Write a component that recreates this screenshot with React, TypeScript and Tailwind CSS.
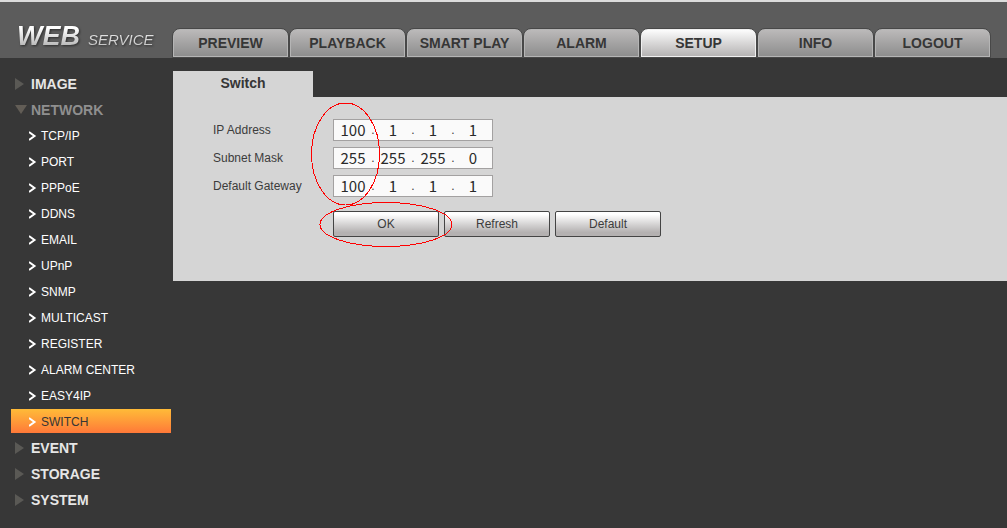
import React from 'react';

const tabs = ['PREVIEW', 'PLAYBACK', 'SMART PLAY', 'ALARM', 'SETUP', 'INFO', 'LOGOUT'];

interface MenuGroup {
  title: string;
  items?: string[];
}

const menu: MenuGroup[] = [
  { title: 'IMAGE' },
  {
    title: 'NETWORK',
    items: [
      'TCP/IP',
      'PORT',
      'PPPoE',
      'DDNS',
      'EMAIL',
      'UPnP',
      'SNMP',
      'MULTICAST',
      'REGISTER',
      'ALARM CENTER',
      'EASY4IP',
      'SWITCH',
    ],
  },
  { title: 'EVENT' },
  { title: 'STORAGE' },
  { title: 'SYSTEM' },
];

const fields = [
  { label: 'IP Address', value: ['100', '1', '1', '1'] },
  { label: 'Subnet Mask', value: ['255', '255', '255', '0'] },
  { label: 'Default Gateway', value: ['100', '1', '1', '1'] },
];

const Header: React.FC = () => (
  <header className="flex h-[58px] items-end border-t-2 border-[#dcdcdc] bg-[#5c5c5c]">
    <h1 className="flex w-[172px] shrink-0 items-baseline gap-2 pb-1 pl-[17px] italic drop-shadow-[1px_1px_1px_rgba(0,0,0,0.5)]">
      <span className="bg-linear-to-b from-white from-30% to-[#b4b4b4] to-80% bg-clip-text pr-1 text-[27px] leading-9 font-bold text-transparent">
        WEB
      </span>
      <span className="-ml-1 bg-linear-to-b from-[#f4f4f4] to-[#b4b4b4] bg-clip-text pr-1 text-[15px] leading-6 text-transparent">
        SERVICE
      </span>
    </h1>
    <nav className="flex">
      {tabs.map((tab) => (
        <button
          key={tab}
          type="button"
          className={`h-[30px] w-[117px] rounded-t-lg border border-[#484848] text-sm font-bold text-[#363636] ${
            tab === 'SETUP'
              ? 'bg-linear-to-b from-white to-[#b3b1b1] shadow-[inset_0_0_0_1px_#f0f0f0]'
              : 'bg-linear-to-b from-[#bdbbbb] to-[#8c8c8c] shadow-[inset_0_0_0_1px_#b5b5b5]'
          }`}
        >
          {tab}
        </button>
      ))}
    </nav>
  </header>
);

const Sidebar: React.FC = () => (
  <aside className="w-[173px] shrink-0 pt-[13px] pr-0.5 pl-[11px]">
    <ul>
      {menu.map(({ title, items }) => (
        <li key={title}>
          <button
            type="button"
            className={`flex h-[26px] w-full items-center pl-1 text-sm font-bold ${
              items ? 'text-[#8f8f8f]' : 'text-[#e6e6e6]'
            }`}
          >
            <svg className="mr-1 h-3 w-3 shrink-0" viewBox="0 0 12 12" aria-hidden="true">
              <path d={items ? 'M0 1H12L6 10Z' : 'M0 0L9 6L0 12Z'} fill={items ? '#625d56' : '#5a5955'} />
            </svg>
            {title}
          </button>
          {items && (
            <ul>
              {items.map((item) => (
                <li key={item} className="h-[26px]">
                  <a
                    href="#"
                    className={`flex h-6 items-center pt-0.5 pl-[18px] text-xs ${
                      item === 'SWITCH'
                        ? 'bg-linear-to-b from-[#ffbb38] to-[#ff7838] text-[#363636]'
                        : 'text-white'
                    }`}
                  >
                    <svg className="mr-1 h-2.5 w-2 shrink-0" viewBox="0 0 8 10" aria-hidden="true">
                      <path d="M0 1L5.5 5L0 9" fill="none" stroke="#fff" strokeWidth="2" />
                    </svg>
                    {item}
                  </a>
                </li>
              ))}
            </ul>
          )}
        </li>
      ))}
    </ul>
  </aside>
);

const AddressField: React.FC<{ label: string; value: string[] }> = ({ label, value }) => {
  const id = label.toLowerCase().replace(' ', '-');

  return (
    <div className="flex items-center">
      <label htmlFor={id} className="w-[120px] shrink-0">
        {label}
      </label>
      <div className="flex h-[22px] w-40 items-center border border-[#a3a1a1] bg-[#fafafa] px-px">
        {value.map((part, index) => (
          <React.Fragment key={index}>
            {index > 0 && <span className="w-1 text-center">.</span>}
            <input
              id={index === 0 ? id : undefined}
              aria-label={index === 0 ? undefined : `${label} part ${index + 1}`}
              defaultValue={part}
              maxLength={3}
              className="h-5 w-9 min-w-0 bg-transparent text-center font-['Noto_Sans_CJK_SC',sans-serif] text-[15px] leading-5 text-[#2a2a2a] outline-none"
            />
          </React.Fragment>
        ))}
      </div>
    </div>
  );
};

const App: React.FC = () => {
  return (
    <div className="flex min-h-screen flex-col bg-[#373737] font-['Liberation_Sans',Arial,sans-serif]">
      <Header />
      <div className="flex flex-1">
        <Sidebar />
        <main className="min-w-0 flex-1 pt-[13px]">
          <h2 className="h-[26px] w-[140px] bg-[#d5d5d5] text-center text-sm leading-6 font-bold text-[#363636]">
            Switch
          </h2>
          <form
            className="relative bg-[#d5d5d5] px-10 pt-[22px] pb-11 text-xs text-[#3c3c3c]"
            onSubmit={(e) => e.preventDefault()}
          >
            <div className="flex flex-col gap-1.5">
              {fields.map((field) => (
                <AddressField key={field.label} {...field} />
              ))}
            </div>
            <div className="mt-3.5 flex gap-[5px] pl-[120px]">
              {['OK', 'Refresh', 'Default'].map((name) => (
                <button
                  key={name}
                  type="button"
                  className="h-[26px] w-[106px] rounded-xs border border-[#444] bg-linear-to-b from-white from-10% to-[#b4b1b1] to-85%"
                >
                  {name}
                </button>
              ))}
            </div>
            {/* hand-drawn marks over the first octets and the OK button */}
            <svg
              className="pointer-events-none absolute top-0 left-[130px] h-40 w-80"
              viewBox="0 0 320 160"
              fill="none"
              stroke="#f00"
              shapeRendering="crispEdges"
              aria-hidden="true"
            >
              <ellipse cx="42.5" cy="57" rx="34" ry="51" />
              <ellipse cx="83" cy="127.5" rx="66" ry="22" />
            </svg>
          </form>
        </main>
      </div>
    </div>
  );
};

export default App;
